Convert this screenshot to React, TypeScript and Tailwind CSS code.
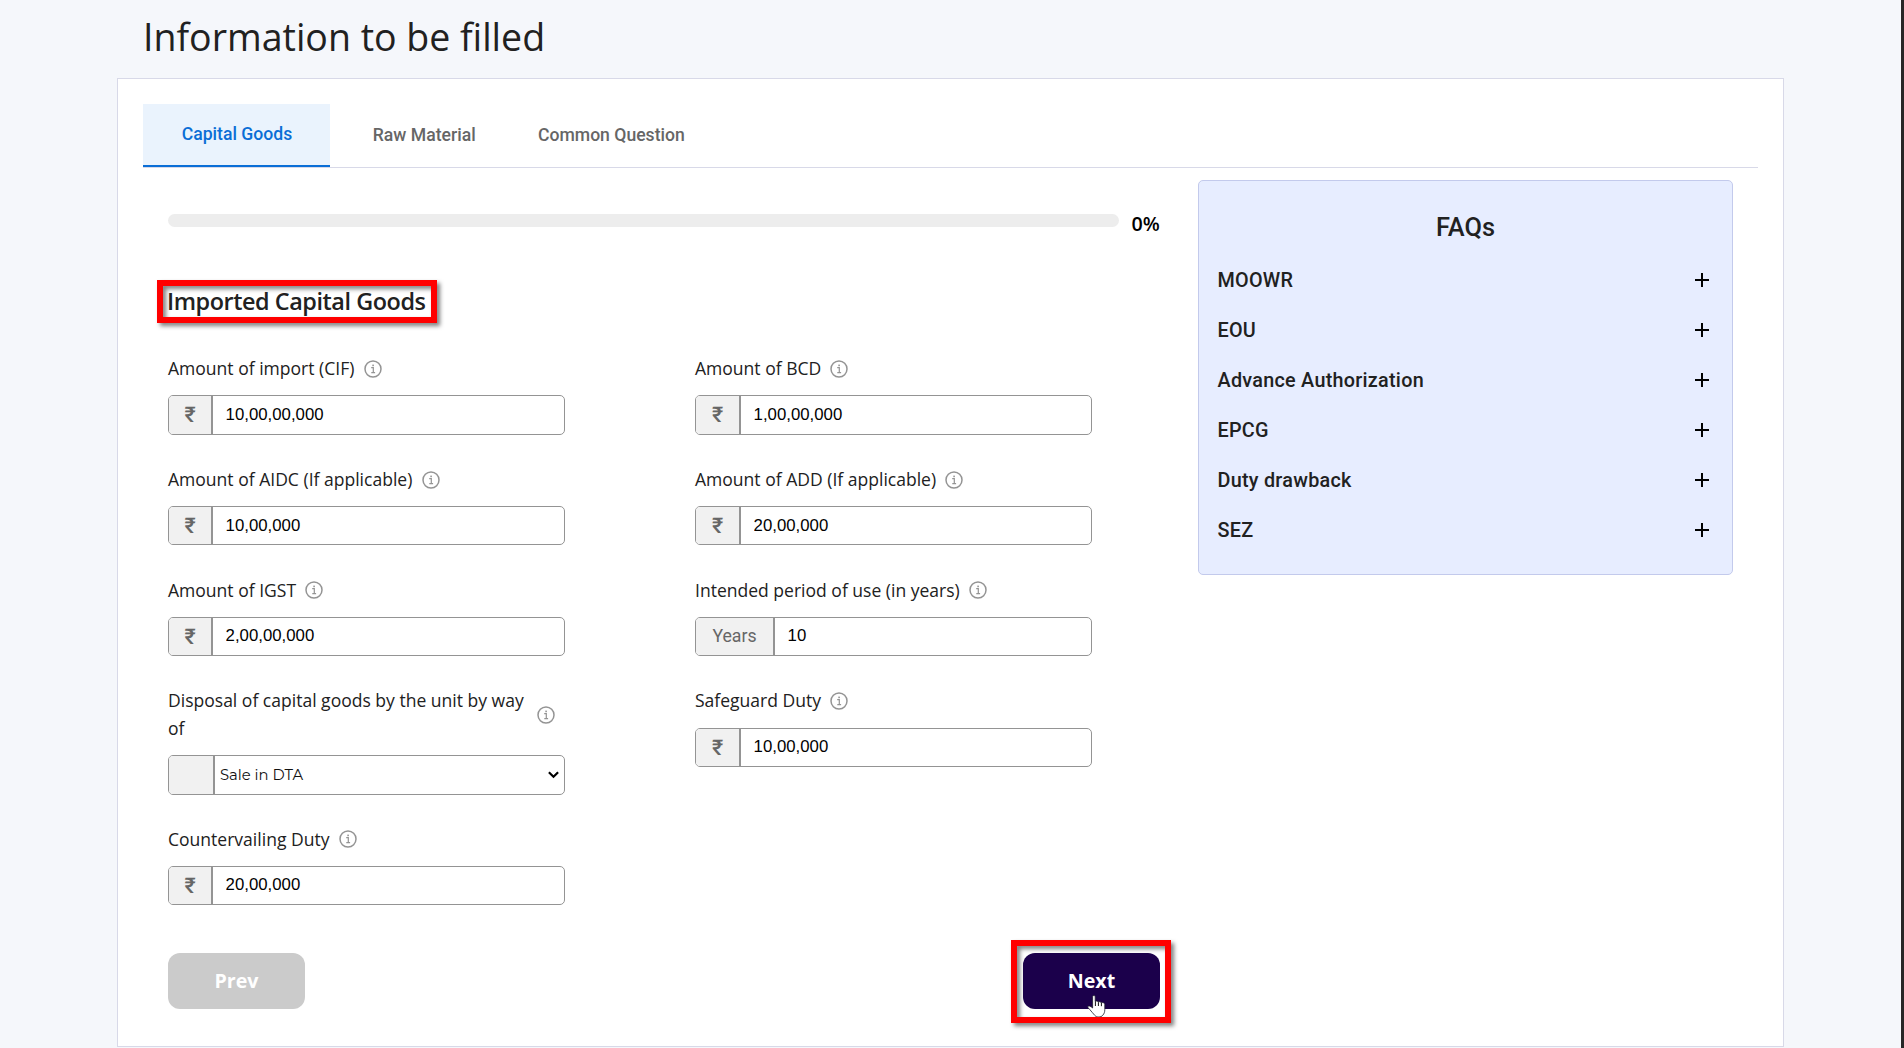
import React from "react";

type FieldData = { label: string; value: string; addon?: string; select?: boolean };

const fields: FieldData[] = [
  { label: "Amount of import (CIF)", value: "10,00,00,000" },
  { label: "Amount of BCD", value: "1,00,00,000" },
  { label: "Amount of AIDC (If applicable)", value: "10,00,000" },
  { label: "Amount of ADD (If applicable)", value: "20,00,000" },
  { label: "Amount of IGST", value: "2,00,00,000" },
  { label: "Intended period of use (in years)", value: "10", addon: "Years" },
  { label: "Disposal of capital goods by the unit by way of", value: "Sale in DTA", select: true },
  { label: "Safeguard Duty", value: "10,00,000" },
  { label: "Countervailing Duty", value: "20,00,000" },
];

const faqs = ["MOOWR", "EOU", "Advance Authorization", "EPCG", "Duty drawback", "SEZ"];

function InfoIcon() {
  return (
    <svg className="size-[18px] shrink-0 text-[#949494]" viewBox="0 0 18 18" fill="none" stroke="currentColor">
      <circle cx="9" cy="9" r="8" strokeWidth="1.5" />
      <path d="M7.2 7.7H9.3V12.6M7.3 12.7H11.1" strokeWidth="1.2" />
      <rect x="8.3" y="4.6" width="1.6" height="1.6" fill="currentColor" stroke="none" />
    </svg>
  );
}

function PlusIcon() {
  return (
    <svg className="size-4" viewBox="0 0 16 16" fill="none" stroke="#000" strokeWidth="2">
      <path d="M1 8H15M8 1V15" />
    </svg>
  );
}

function HandCursor() {
  return (
    <svg className="absolute left-[64px] top-[42px] h-[24px] w-[19px]" viewBox="0 0 19 24">
      <path
        d="M5.6 1.6C5.6 .1 8.2 .1 8.2 1.6V6.4C9 5.8 10.8 6 11.2 7C12.2 6.4 13.8 6.7 14.2 7.8C15.6 7.2 17.8 7.8 17.8 9.6V14.6C17.8 17 17.2 18.6 15.8 20.2C14 22.6 9.6 22.6 7.8 20.4C6 18.4 4.6 16.6 3 14.8C1.6 13.2 .4 12.4 .8 11.6C1.4 10.6 3.6 11 5.6 13Z"
        fill="#fff"
        stroke="#1a1a2a"
        strokeWidth="0.8"
        strokeLinejoin="round"
      />
      <path d="M8.4 6.4V11M11.4 7.2V11M14.4 8V11.2" fill="none" stroke="#111" strokeWidth="1" />
    </svg>
  );
}

function Highlight({ className }: { className: string }) {
  return (
    <div
      className={
        "pointer-events-none absolute border-[6px] border-[#ff0000] drop-shadow-[3px_3px_2px_rgba(0,0,0,0.5)] " +
        className
      }
    />
  );
}

function Field({ label, value, addon, select }: FieldData) {
  return (
    <div className="group flex w-[397px] flex-col gap-[12.8px]">
      <div className="flex items-center gap-[9.2px]">
        <label className="max-w-[360px] text-[17.54px] leading-[27.5px] text-[#212121]">{label}</label>
        <InfoIcon />
      </div>
      <div className="flex h-[39.4px] overflow-hidden rounded-[5px] border border-[#949494] bg-white">
        {select ? (
          <>
            <div className="w-[46px] shrink-0 border-r-2 border-[#949494] bg-[#f1f1f1]" />
            <div className="flex flex-1 items-center justify-between pl-[5px] pr-[5px]">
              <span className="pt-px font-['Montserrat',Inter,sans-serif] text-[14.8px] leading-none text-[#111]">
                {value}
              </span>
              <svg className="h-[8px] w-[11px]" viewBox="0 0 11 8" fill="none" stroke="#000" strokeWidth="2.2">
                <path d="M.9 1.2L5.5 5.8L10.1 1.2" />
              </svg>
            </div>
          </>
        ) : (
          <>
            <div
              className={
                "flex shrink-0 items-center justify-center border-r-2 border-[#949494] bg-[#f1f1f1] font-['Roboto',sans-serif] leading-none text-[#666] " +
                (addon ? "w-[79px] text-[17.7px]" : "w-[44px] text-[21.5px] font-medium group-even:w-[45px]")
              }
            >
              {addon ?? "₹"}
            </div>
            <input
              className="min-w-0 flex-1 pb-[1.2px] pl-[12.6px] font-['Liberation_Sans',Arial,sans-serif] text-[16.8px] text-black outline-none"
              defaultValue={value}
            />
          </>
        )}
      </div>
    </div>
  );
}

export default function App() {
  return (
    <div className="flex h-[1048px] w-full overflow-hidden bg-[#f5f7fb] font-['Open_Sans',sans-serif]">
      <div className="min-w-0 flex-1 pl-[117px] pt-[11px]">
        <h1 className="mb-[15px] pl-[26px] text-[37.5px] leading-[52px] text-[#212121]">Information to be filled</h1>

        <div className="h-[969px] w-[1667px] border border-[#d8d9e8] bg-white px-[25px] pt-[25px]">
          <nav className="flex h-16 border-b border-[#d8d9e8] font-['Roboto',sans-serif] text-[17.6px] font-medium text-[#666]">
            <div className="h-[63px] w-[187px] border-b-2 border-[#0a6ed6] bg-[#eaf3fd] pl-px text-center leading-[60px] text-[#0a6ed6]">
              Capital Goods
            </div>
            <div className="ml-[42.8px] leading-[62px]">Raw Material</div>
            <div className="ml-[62.4px] leading-[62px]">Common Question</div>
          </nav>

          <div className="flex items-start gap-[38px] pl-[25px]">
            <section className="w-[992px] pt-[42px]">
              <div className="flex h-[26px]">
                <div className="mt-1 h-[13px] w-[951px] rounded-full bg-[#ededed]" />
                <span className="ml-[12.5px] text-[19.7px] font-semibold leading-[28px] text-black">0%</span>
              </div>

              <div className="relative mt-[49px]">
                <h2 className="-ml-px text-[23.4px] font-semibold leading-8 tracking-[-0.44px] text-[#212121]">
                  Imported Capital Goods
                </h2>
                <Highlight className="-left-[11px] -top-[5px] h-[43px] w-[280px]" />
              </div>

              <div className="mt-[38px] grid grid-cols-[397px_397px] items-start gap-x-[130px] gap-y-[31.1px]">
                {fields.map((f) => (
                  <Field key={f.label} {...f} />
                ))}
              </div>

              <div className="mt-[47.5px] flex justify-between text-[19.65px] font-bold text-white">
                <button className="h-[56px] w-[137px] rounded-xl bg-[#cbcbcb]">Prev</button>
                <div className="relative">
                  <button className="h-[56px] w-[137px] rounded-xl bg-[#1b004b]">Next</button>
                  <HandCursor />
                  <Highlight className="-left-[12px] -top-[13px] h-[83px] w-[160px]" />
                </div>
              </div>
            </section>

            <aside className="mt-3 h-[395px] w-[535px] rounded-[5px] border border-[#c3caec] bg-[#e7edff] pt-[26px] font-['Roboto',sans-serif] font-medium text-[#212121]">
              <h3 className="mb-2 text-center text-[25.4px] leading-10">FAQs</h3>
              {faqs.map((q) => (
                <div key={q} className="flex h-[50px] items-center justify-between pl-[18.5px] pr-[22px]">
                  <span className="pt-0.5 text-[19.8px] leading-[48px] tracking-[0.27px]">{q}</span>
                  <PlusIcon />
                </div>
              ))}
            </aside>
          </div>
        </div>
      </div>
      <div className="w-[3px] shrink-0 bg-[#272727]" />
    </div>
  );
}
